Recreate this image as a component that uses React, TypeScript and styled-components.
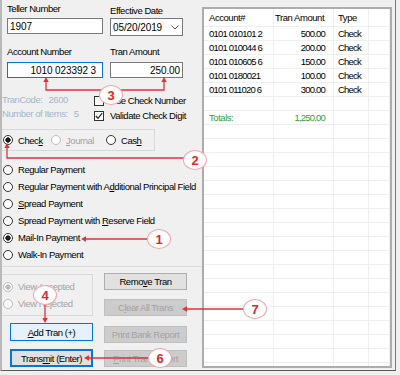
import React from 'react'
import styled, { createGlobalStyle, css } from 'styled-components'

const GlobalStyle = createGlobalStyle`
  html, body {
    margin: 0;
    padding: 0;
    background: #f0f0f0;
  }
  body {
    font-family: 'Liberation Sans', Arial, sans-serif;
  }
`

const Page = styled.div`
  position: relative;
  width: 400px;
  height: 375px;
  background: #f0f0f0;
  overflow: hidden;
`

const Window = styled.div`
  box-sizing: border-box;
  width: 396px;
  height: 371px;
  display: flex;
  background: #f0f0f0;
  border-left: 2px solid #b9b9b9;
  border-right: 1px solid #7a7a7a;
  border-bottom: 1px solid #5a5a5a;
  font-family: 'Liberation Sans', Arial, sans-serif;
  font-size: 9.5px;
  letter-spacing: -0.45px;
  color: #000;
`

const LeftPanel = styled.div`
  width: 200px;
  flex-shrink: 0;
  display: flex;
  flex-direction: column;
`

const FieldRow = styled.div<{ $top: number }>`
  display: flex;
  gap: 7px;
  padding-left: 5px;
  margin-top: ${p => p.$top}px;
`

const Field = styled.div<{ $w: number; $drop?: number }>`
  display: flex;
  flex-direction: column;
  width: ${p => p.$w}px;
  padding-top: ${p => p.$drop ?? 0}px;
`

const FieldLabel = styled.div<{ $gap: number }>`
  line-height: 11px;
  height: 11px;
  margin-bottom: ${p => p.$gap}px;
  white-space: nowrap;
`

const TextBox = styled.div<{ $h: number; $focus?: boolean; $right?: number }>`
  box-sizing: border-box;
  height: ${p => p.$h}px;
  background: #fff;
  border: 1px solid ${p => (p.$focus ? '#0078d7' : '#7a7a7a')};
  display: flex;
  align-items: center;
  justify-content: ${p => (p.$right !== undefined ? 'flex-end' : 'space-between')};
  padding: 0 ${p => p.$right ?? 3}px 0 2px;
  font-size: 10px;
  letter-spacing: -0.1px;
  white-space: nowrap;
`

const InfoRow = styled.div`
  display: flex;
  margin-top: 15px;
`

const InfoCol = styled.div`
  width: 92px;
  display: flex;
  flex-direction: column;
  color: #a3b6cb;
`

const InfoLine = styled.div`
  line-height: 14px;
  height: 14px;
  white-space: nowrap;
`

const InfoValue = styled.span`
  margin-left: 6px;
`

const CheckCol = styled.div`
  display: flex;
  flex-direction: column;
`

const CheckRow = styled.div`
  display: flex;
  align-items: center;
  gap: 6px;
  height: 15px;
  white-space: nowrap;
`

const Box = styled.span`
  box-sizing: border-box;
  width: 10px;
  height: 10px;
  border: 1px solid #333;
  background: #fff;
  display: flex;
  align-items: center;
  justify-content: center;
`

const GroupBox = styled.div<{ $top: number; $h: number; $w?: number; $column?: boolean }>`
  box-sizing: border-box;
  margin-top: ${p => p.$top}px;
  height: ${p => p.$h}px;
  width: ${p => (p.$w ? `${p.$w}px` : 'auto')};
  border: 1px solid #d9d9d9;
  border-left: none;
  display: flex;
  flex-direction: ${p => (p.$column ? 'column' : 'row')};
  align-items: ${p => (p.$column ? 'stretch' : 'center')};
  padding-top: ${p => (p.$column ? 3 : 0)}px;
`

const Option = styled.div<{ $w?: number; $muted?: boolean }>`
  display: flex;
  align-items: center;
  gap: 5px;
  height: 17px;
  padding-left: 1px;
  width: ${p => (p.$w ? `${p.$w}px` : 'auto')};
  flex-shrink: 0;
  white-space: nowrap;
  color: ${p => (p.$muted ? '#a4a4a4' : '#000')};
`

const Radio = styled.span<{ $checked?: boolean; $disabled?: boolean }>`
  box-sizing: border-box;
  width: 10px;
  height: 10px;
  border-radius: 50%;
  flex-shrink: 0;
  border: 1px solid ${p => (p.$disabled ? '#bcbcbc' : '#333')};
  background: #fff;
  ${p =>
    p.$checked &&
    css`
      background: radial-gradient(circle, ${p.$disabled ? '#bcbcbc' : '#1a1a1a'} 0 2.4px, #fff 2.9px);
    `}
`

const Key = styled.span`
  text-decoration: underline;
  text-underline-offset: 1px;
`

const PaymentList = styled.div`
  display: flex;
  flex-direction: column;
  margin-top: 10px;
`

const Separator = styled.div`
  margin-top: 3px;
  height: 1px;
  background: #dcdcdc;
`

const BottomArea = styled.div`
  display: grid;
  grid-template-columns: 91px 83px;
  column-gap: 11px;
`

const ButtonCol = styled.div`
  display: flex;
  flex-direction: column;
`

type Variant = 'normal' | 'disabled' | 'hover' | 'default'

const Button = styled.div<{ $variant: Variant; $top: number; $h: number; $left?: number }>`
  box-sizing: border-box;
  width: 83px;
  height: ${p => p.$h}px;
  margin-top: ${p => p.$top}px;
  margin-left: ${p => p.$left ?? 0}px;
  display: flex;
  align-items: center;
  justify-content: center;
  white-space: nowrap;
  border: 1px solid #adadad;
  background: #e1e1e1;
  color: #000;
  ${p =>
    p.$variant === 'disabled' &&
    css`
      background: #cccccc;
      border-color: #bfbfbf;
      color: #a2a2a2;
    `}
  ${p =>
    p.$variant === 'hover' &&
    css`
      background: #e5f1fb;
      border-color: #0078d7;
    `}
  ${p =>
    p.$variant === 'default' &&
    css`
      border-color: #0078d7;
      box-shadow: inset 0 0 0 1px #0078d7;
    `}
`

const GridPanel = styled.div`
  flex: 1;
  margin: 7px 3px 2px 0;
  box-sizing: border-box;
  border: 2px solid #adadad;
  background: #fff;
  overflow: hidden;
`

const GridRow = styled.div<{ $h: number }>`
  display: grid;
  grid-template-columns: 70px 60px 35px 1fr;
  height: ${p => p.$h}px;
`

const Cell = styled.div<{ $align?: 'left' | 'right'; $pad?: number; $green?: boolean; $digits?: boolean }>`
  box-sizing: border-box;
  border-right: 1px solid #efefef;
  border-bottom: 1px solid #efefef;
  display: flex;
  align-items: center;
  justify-content: ${p => (p.$align === 'right' ? 'flex-end' : 'flex-start')};
  padding: ${p => (p.$align === 'right' ? `0 ${p.$pad ?? 8}px 0 0` : `0 0 0 ${p.$pad ?? 5}px`)};
  white-space: nowrap;
  overflow: hidden;
  color: ${p => (p.$green ? '#36a036' : '#000')};
  letter-spacing: ${p => (p.$digits ? '-0.8px' : '-0.45px')};
`

const Overlay = styled.svg`
  position: absolute;
  left: 0;
  top: 0;
  pointer-events: none;
`

const Badge = styled.div<{ $x: number; $y: number }>`
  position: absolute;
  left: ${p => p.$x - 12}px;
  top: ${p => p.$y - 10}px;
  box-sizing: border-box;
  width: 24px;
  height: 20px;
  border-radius: 50%;
  border: 1px solid #f3a3a6;
  background: #fff;
  display: flex;
  align-items: center;
  justify-content: center;
  font-family: 'Liberation Sans', Arial, sans-serif;
  font-weight: bold;
  font-size: 13px;
  color: #e3252d;
`

const transactions = [
  { account: '0101 010101 2', amount: '500.00', type: 'Check' },
  { account: '0101 010044 6', amount: '200.00', type: 'Check' },
  { account: '0101 010605 6', amount: '150.00', type: 'Check' },
  { account: '0101 0180021', amount: '100.00', type: 'Check' },
  { account: '0101 011020 6', amount: '300.00', type: 'Check' },
]

const Chevron = () => (
  <svg width="8" height="5" viewBox="0 0 8 5">
    <polyline points="0.5,0.5 4,4 7.5,0.5" fill="none" stroke="#555" strokeWidth="1" />
  </svg>
)

const Tick = () => (
  <svg width="8" height="8" viewBox="0 0 8 8">
    <polyline points="0.8,4 3,6.3 7.2,1.2" fill="none" stroke="#222" strokeWidth="1.2" />
  </svg>
)

const RED = '#e3303a'

const Annotations = () => (
  <Overlay width="400" height="375" viewBox="0 0 400 375">
    <g fill="none" stroke={RED} strokeWidth="1.3">
      <path d="M46 81 V90 H164 V81" />
      <path d="M7 147 V158 H184" />
      <path d="M148 239 H85" />
      <path d="M45 305 V319" />
      <path d="M148 358 H88" />
      <path d="M243 309 H186" />
    </g>
    <g fill={RED}>
      <polygon points="46,77 43.3,82 48.7,82" />
      <polygon points="164,77 161.3,82 166.7,82" />
      <polygon points="7,143 4.3,148 9.7,148" />
      <polygon points="81,239 86,236.3 86,241.7" />
      <polygon points="45,323 42.3,318 47.7,318" />
      <polygon points="84,358 89,355.3 89,360.7" />
      <polygon points="182,309 187,306.3 187,311.7" />
    </g>
  </Overlay>
)

const App: React.FC = () => {
  const fillerRows = Array.from({ length: 20 })
  return (
    <Page>
      <GlobalStyle />
      <Window>
        <LeftPanel>
          <FieldRow $top={3}>
            <Field $w={96}>
              <FieldLabel $gap={4}>Teller Number</FieldLabel>
              <TextBox $h={16}>1907</TextBox>
            </Field>
            <Field $w={73} $drop={2}>
              <FieldLabel $gap={2}>Effective Date</FieldLabel>
              <TextBox $h={18}>
                05/20/2019
                <Chevron />
              </TextBox>
            </Field>
          </FieldRow>
          <FieldRow $top={10}>
            <Field $w={96}>
              <FieldLabel $gap={5}>Account Number</FieldLabel>
              <TextBox $h={16} $focus $right={6}>
                1010 023392 3
              </TextBox>
            </Field>
            <Field $w={73}>
              <FieldLabel $gap={5}>Tran Amount</FieldLabel>
              <TextBox $h={16} $right={2}>
                250.00
              </TextBox>
            </Field>
          </FieldRow>

          <InfoRow>
            <InfoCol>
              <InfoLine>
                TranCode:<InfoValue>2600</InfoValue>
              </InfoLine>
              <InfoLine>
                Number of Items:<InfoValue>5</InfoValue>
              </InfoLine>
            </InfoCol>
            <CheckCol>
              <CheckRow>
                <Box />
                Use Check Number
              </CheckRow>
              <CheckRow>
                <Box>
                  <Tick />
                </Box>
                Validate Check Digit
              </CheckRow>
            </CheckCol>
          </InfoRow>

          <GroupBox $top={6} $h={22} $w={153}>
            <Option $w={47}>
              <Radio $checked />
              <span>
                Chec<Key>k</Key>
              </span>
            </Option>
            <Option $w={54} $muted>
              <Radio $disabled />
              <span>
                <Key>J</Key>ournal
              </span>
            </Option>
            <Option>
              <Radio />
              <span>
                Cas<Key>h</Key>
              </span>
            </Option>
          </GroupBox>

          <PaymentList>
            <Option>
              <Radio />
              Regular Payment
            </Option>
            <Option>
              <Radio />
              <span>
                Regular Payment with A<Key>d</Key>ditional Principal Field
              </span>
            </Option>
            <Option>
              <Radio />
              <span>
                <Key>S</Key>pread Payment
              </span>
            </Option>
            <Option>
              <Radio />
              <span>
                Spread Payment with <Key>R</Key>eserve Field
              </span>
            </Option>
            <Option>
              <Radio $checked />
              Mail-In Payment
            </Option>
            <Option>
              <Radio />
              Walk-In Payment
            </Option>
          </PaymentList>

          <Separator />

          <BottomArea>
            <ButtonCol>
              <GroupBox $top={7} $h={42} $column>
                <Option $muted>
                  <Radio $checked $disabled />
                  View Accepted
                </Option>
                <Option $muted>
                  <Radio $disabled />
                  View Rejected
                </Option>
              </GroupBox>
              <Button $variant="hover" $top={7} $h={18} $left={8}>
                <span>
                  <Key>A</Key>dd Tran (+)
                </span>
              </Button>
              <Button $variant="default" $top={8} $h={18} $left={8}>
                <span>
                  Trans<Key>m</Key>it (Enter)
                </span>
              </Button>
            </ButtonCol>
            <ButtonCol>
              <Button $variant="normal" $top={6} $h={17}>
                <span>
                  Remo<Key>v</Key>e Tran
                </span>
              </Button>
              <Button $variant="disabled" $top={9} $h={17}>
                <span>
                  C<Key>l</Key>ear All Trans
                </span>
              </Button>
              <Button $variant="disabled" $top={10} $h={17}>
                Print Bank Report
              </Button>
              <Button $variant="disabled" $top={7} $h={17}>
                <span>
                  <Key>P</Key>rint Tran Report
                </span>
              </Button>
            </ButtonCol>
          </BottomArea>
        </LeftPanel>

        <GridPanel>
          <GridRow $h={18}>
            <Cell>Account#</Cell>
            <Cell $pad={1}>Tran Amount</Cell>
            <Cell $pad={4}>Type</Cell>
            <Cell />
          </GridRow>
          {transactions.map(t => (
            <GridRow $h={14} key={t.account}>
              <Cell $digits>{t.account}</Cell>
              <Cell $align="right" $digits>
                {t.amount}
              </Cell>
              <Cell $pad={4} $digits>
                {t.type}
              </Cell>
              <Cell />
            </GridRow>
          ))}
          <GridRow $h={14}>
            <Cell />
            <Cell />
            <Cell />
            <Cell />
          </GridRow>
          <GridRow $h={14}>
            <Cell $green>Totals:</Cell>
            <Cell $align="right" $green $digits>
              1,250.00
            </Cell>
            <Cell />
            <Cell />
          </GridRow>
          {fillerRows.map((_, i) => (
            <GridRow $h={14} key={i}>
              <Cell />
              <Cell />
              <Cell />
              <Cell />
            </GridRow>
          ))}
        </GridPanel>
      </Window>

      <Annotations />
      <Badge $x={111} $y={95}>3</Badge>
      <Badge $x={195} $y={160}>2</Badge>
      <Badge $x={159} $y={239}>1</Badge>
      <Badge $x={45} $y={295}>4</Badge>
      <Badge $x={160} $y={358}>6</Badge>
      <Badge $x={255} $y={309}>7</Badge>
    </Page>
  )
}

export default App
